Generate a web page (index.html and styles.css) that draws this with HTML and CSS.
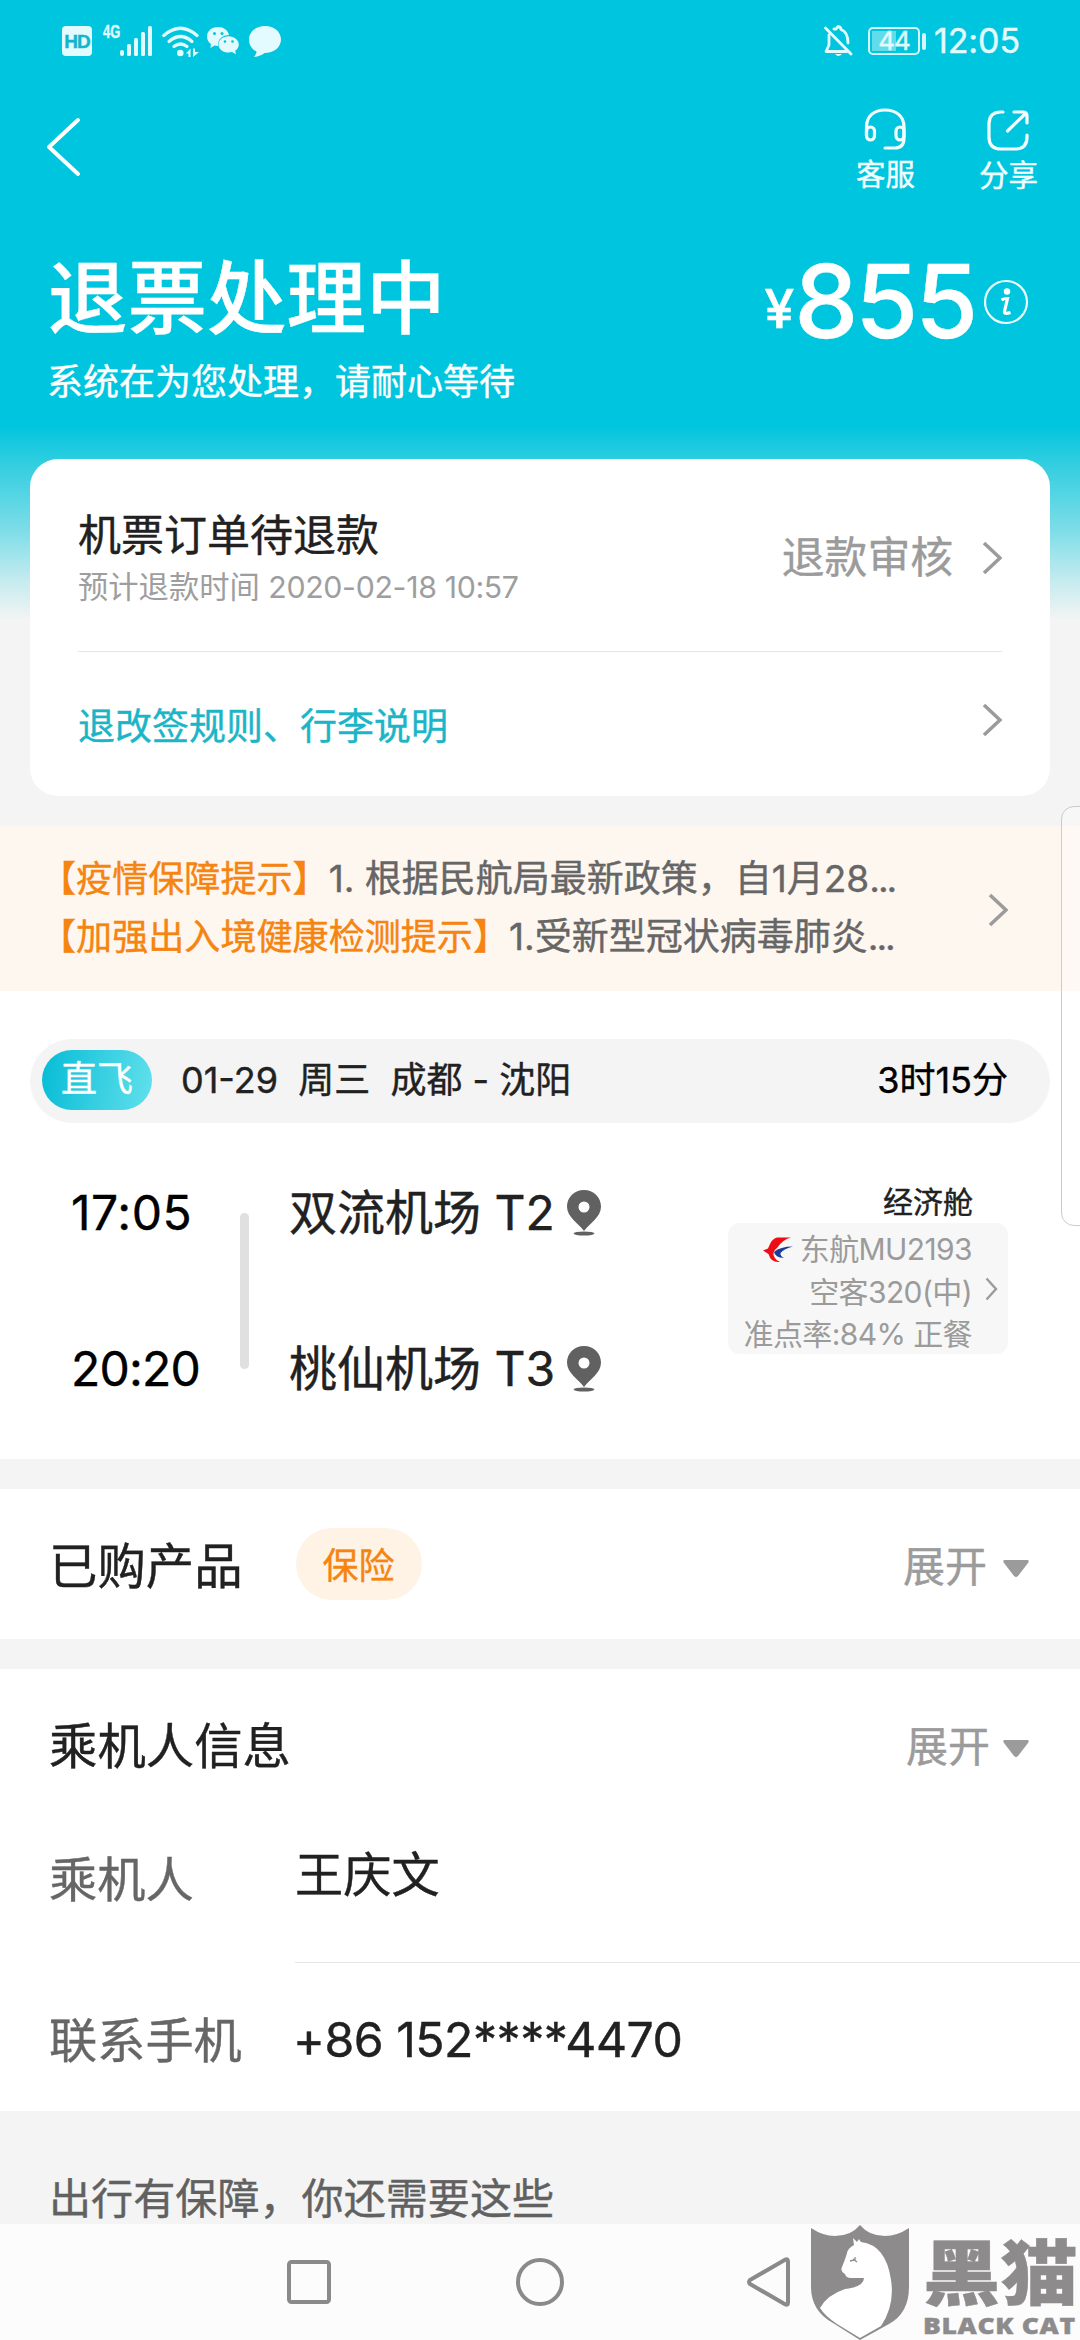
FILE: index.html
```html
<!DOCTYPE html>
<html lang="zh-CN">
<head>
<meta charset="utf-8">
<title>退票处理中</title>
<link rel="stylesheet" href="styles.css">
</head>
<body>
<div class="screen">
  <header class="hero">
    <div class="status">
      <div class="status-left">
        <span class="hd">HD</span>
        <span class="net">4G</span>
        <svg class="signal" width="32" height="30" viewBox="0 0 32 30"><g fill="#e3fbff"><rect x="0" y="24" width="4" height="6" rx="2"/><rect x="7" y="18" width="4" height="12" rx="1.5"/><rect x="14" y="12" width="4" height="18" rx="1.5"/><rect x="21" y="6" width="4" height="24" rx="1.5"/><rect x="28" y="0" width="4" height="30" rx="1.5"/></g></svg>
        <svg class="wifi" width="37" height="31" viewBox="0 0 37 31"><g fill="none" stroke="#e3fbff" stroke-width="3.2" stroke-linecap="round"><path d="M1.8 9.5Q18.500-5 35 9.500"/><path d="M7 15.500Q18.500 5.500 30 15.500"/><path d="M12 20.500Q18.500 15.500 25 20.500"/></g><circle cx="18.300" cy="27" r="3.300" fill="#e3fbff"/><path d="M24 27.500L28.500 22.500V31H26.500V27.500ZM31 22.500V31L37 26H33V22.500Z" fill="#e3fbff"/></svg>
        <svg class="wechat" width="32" height="28" viewBox="0 0 32 28"><path fill="#e3fbff" d="M11 0C4.500 0 0 4.200 0 9.500c0 3 1.400 5.600 3.900 7.400L3.500 21l4-2.400c1.200.3 2.300.4 3.600.4-.7-6.700 4.700-11 10.900-11C21 3 16.500 0 11 0Z"/><path fill="#e3fbff" d="M21.500 9.200c-5.700 0-10 3.700-10 8.200s4.300 8.200 10 8.200c1.300 0 2.400-.2 3.500-.5l4 2.100-.8-3.500c2.300-1.500 3.600-3.700 3.600-6.300 0-4.500-4.600-8.200-10.300-8.200Z"/><g fill="#00c5de"><circle cx="7.500" cy="6.500" r="1.500"/><circle cx="15" cy="6.500" r="1.500"/><circle cx="18" cy="14.500" r="1.300"/><circle cx="25.500" cy="14.500" r="1.300"/></g></svg>
        <svg width="32" height="31" viewBox="0 0 32 31"><path fill="#e3fbff" d="M16 0C7 0 0 5.800 0 13.500 0 19 3 23.500 7.500 25.600 7.500 28 6 29.500 5 31c4.500-.5 8-2 10.500-4C25 27 32 21.200 32 13.500S25 0 16 0Z"/></svg>
      </div>
      <div class="status-right">
        <svg class="bell" width="29" height="32" viewBox="0 0 29 32"><g fill="none" stroke="#e3fbff" stroke-width="2.800" stroke-linecap="round" stroke-linejoin="round"><path d="M1.500 3L27 29"/><path d="M5 10V20L2 26.500H23"/><path d="M10 4Q12 5 14 1.500Q17 2 17 4.500Q24 7 24 18"/></g><path d="M11 29h7q-3.500 4-7 0Z" fill="#e3fbff"/></svg>
        <span class="battery">44</span><i class="cap"></i>
        <span class="clock">12:05</span>
      </div>
    </div>
    <nav class="topbar">
      <svg width="36" height="60" viewBox="0 0 36 60"><path d="M32 3L3 30L32 57" fill="none" stroke="#fff" stroke-width="4" stroke-linecap="round" stroke-linejoin="round"/></svg>
      <div class="actions">
        <div class="action">
          <svg width="42" height="42" viewBox="0 0 42 42"><g fill="none" stroke="#f2feff" stroke-width="3.200" stroke-linecap="round"><path d="M2.500 28V19C2.500 8 10 2 21 2S40 8 40 19V30Q40 40 31 40H21"/><rect x="2.500" y="19" width="8" height="13" rx="4"/><rect x="32" y="19" width="8" height="13" rx="4"/></g></svg>
          <span>客服</span>
        </div>
        <div class="action">
          <svg width="42" height="42" viewBox="0 0 42 42"><g fill="none" stroke="#f2feff" stroke-width="3.200" stroke-linecap="round" stroke-linejoin="round"><path d="M16 3H14Q2 3 2 15V28Q2 40 14 40H28Q40 40 40 28V26"/><path d="M27 3H36Q40 3 40 7V14M39 4L20.500 22"/></g></svg>
          <span>分享</span>
        </div>
      </div>
    </nav>
    <div class="headline">
      <h1>退票处理中</h1>
      <div class="amount"><span class="yen">¥</span><span class="sum">855</span>
        <svg width="46" height="46" viewBox="0 0 46 46"><circle cx="23" cy="23" r="21" fill="none" stroke="#e8fcff" stroke-width="2.200"/><circle cx="24" cy="12.500" r="3.200" fill="#fff"/><path d="M18.500 21Q21 19.500 24.500 19.500L21.500 32.500Q21 35.500 27.500 33.500" fill="none" stroke="#fff" stroke-width="3.200"/></svg>
      </div>
    </div>
    <p class="lead">系统在为您处理，请耐心等待</p>
  </header>

  <section class="card">
    <div class="refund">
      <div>
        <h2>机票订单待退款</h2>
        <p>预计退款时间 <span class="stamp">2020-02-18 10:57</span></p>
      </div>
      <div class="review">退款审核<svg class="chev" viewBox="0 0 20 34"><path d="M2 2L18 17L2 32"/></svg></div>
    </div>
    <div class="rules"><span>退改签规则、行李说明</span><svg class="chev" viewBox="0 0 20 34"><path d="M2 2L18 17L2 32"/></svg></div>
  </section>

  <section class="notice">
    <div>
      <p><b>【疫情保障提示】</b>1. 根据民航局最新政策，自1月28<span class="dots">...</span></p>
      <p><b>【加强出入境健康检测提示】</b>1.受新型冠状病毒肺炎<span class="dots">...</span></p>
    </div>
    <svg class="chev" viewBox="0 0 20 34"><path d="M2 2L18 17L2 32"/></svg>
  </section>

  <section class="flight">
    <div class="route">
      <span class="direct">直飞</span>
      <span class="day">01-29&nbsp; 周三&nbsp; 成都 - 沈阳</span>
      <span class="duration">3时15分</span>
    </div>
    <div class="legs">
      <div class="times"><span class="depart">17:05</span><span class="arrive">20:20</span></div>
      <i class="bar"></i>
      <div class="ports">
        <span>双流机场 T2<svg class="pin" viewBox="0 0 34 46"><path fill-rule="evenodd" d="M17 0C7.500 0 0 7.300 0 16.500 0 27 11 33 17 41 23 33 34 27 34 16.500 34 7.300 26.500 0 17 0Zm0 11.500a5.500 5.500 0 1 1 0 11a5.500 5.500 0 1 1 0-11Z"/><ellipse cx="17" cy="43.500" rx="10.500" ry="2"/></svg></span>
        <span>桃仙机场 T3<svg class="pin" viewBox="0 0 34 46"><path fill-rule="evenodd" d="M17 0C7.500 0 0 7.300 0 16.500 0 27 11 33 17 41 23 33 34 27 34 16.500 34 7.300 26.500 0 17 0Zm0 11.500a5.500 5.500 0 1 1 0 11a5.500 5.500 0 1 1 0-11Z"/><ellipse cx="17" cy="43.500" rx="10.500" ry="2"/></svg></span>
      </div>
      <div class="cabin">
        <span class="class">经济舱</span>
        <div class="plane">
          <div class="specs">
            <span><svg width="30" height="26" viewBox="0 0 30 26"><path fill="#ee0d12" d="M0 13.500L5 11.500Q9 1 14 .500H28Q19 3 14 11Q10 14 10.500 18Q12 23 17 25Q8 26 5.500 17Z"/><path fill="#1c3b96" d="M11 15Q17 9.500 30 9.500Q21 11.500 17.500 16Q17 19 21 21Q12 20.500 11 15Z"/></svg>东航MU2193</span>
            <span>空客320(中)</span>
            <span>准点率:84% 正餐</span>
          </div>
          <svg class="chev small" viewBox="0 0 13 24"><path d="M1.500 1.500L11 12L1.500 22.500"/></svg>
        </div>
      </div>
    </div>
  </section>

  <section class="products">
    <h3>已购产品</h3><span class="tag">保险</span>
    <span class="expand">展开<svg width="26" height="18" viewBox="0 0 26 18"><path d="M2 0H24Q27 0 25 3L15 16Q13 18 11 16L1 3Q-1 0 2 0Z"/></svg></span>
  </section>

  <section class="people">
    <div class="people-head"><h3>乘机人信息</h3><span class="expand near">展开<svg width="26" height="18" viewBox="0 0 26 18"><path d="M2 0H24Q27 0 25 3L15 16Q13 18 11 16L1 3Q-1 0 2 0Z"/></svg></span></div>
    <div class="field"><span class="label">乘机人</span><span class="value name">王庆文</span></div>
    <div class="field"><span class="label">联系手机</span><span class="value phone">+86 152****4470</span></div>
  </section>

  <p class="more">出行有保障，你还需要这些</p>

  <footer class="nav">
    <svg width="44" height="44" viewBox="0 0 44 44"><rect x="2" y="2" width="40" height="40" rx="2.500"/></svg>
    <svg width="48" height="48" viewBox="0 0 48 48"><circle cx="24" cy="24" r="22"/></svg>
    <svg width="44" height="50" viewBox="0 0 44 50"><path d="M38.500 2.500Q41 1.500 41 4.500V45.500Q41 48.500 38.500 47.500L3 27Q1 25 3 23Z"/></svg>
  </footer>

  <aside class="edge-panel"></aside>
  <div class="watermark">
    <svg width="98" height="116" viewBox="0 0 98 116"><path fill="#8e8b8c" d="M0 3Q12 11 24 11Q40 11 49 0Q58 11 74 11Q86 11 98 3V62Q98 88 78 99L49 115L22 98Q0 86 0 62Z"/><path fill="#fff" d="M42 13L46 17L48 14Q49 16 50 17Q75 20 80 55Q84 80 70 101L49 113L26 99Q14 91 9 83Q16 70 34 64Q53 62 53 53H40Q35 53 34 49Q29 46 31 42Q35 32 36 28Q37 23 43 20Z"/><path d="M39 36L43 35M44 36V32M42 34L46 37" stroke="#8e8b8c" stroke-width="1.300"/></svg>
    <div class="brand"><span class="brand-cn">黑猫</span><span class="brand-en">BLACK CAT</span></div>
  </div>
</div>
</body>
</html>
```
FILE: styles.css
```css
* { box-sizing: border-box; margin: 0; padding: 0; }
body { width: 1080px; height: 2340px; overflow: hidden; background: #f4f4f4; color: #212121; font-family: Inter, "Noto Sans CJK SC", sans-serif; -webkit-text-stroke: .4px; }
svg { display: block; flex: none; }
h1, h2, h3, b { font-weight: 400; }
.screen { position: relative; height: 2340px; overflow: hidden; display: flex; flex-direction: column; background: linear-gradient(#00c5de 0, #00c5de 425px, #2dcde0 460px, #7ddde8 530px, #c4ebef 580px, #f4f4f4 620px); }

.hero { height: 459px; color: #fff; flex: none; }
.status { height: 82px; display: flex; justify-content: space-between; align-items: center; padding: 0 60px 0 62px; color: #e3fbff; }
.status-left, .status-right { display: flex; align-items: center; }
.hd { width: 30px; height: 30px; border-radius: 4px; background: #e3fbff; color: #14b4cc; font: 700 19px/31px "Liberation Sans", sans-serif; text-align: center; letter-spacing: -1px; }
.net { margin: -18px 0 0 11px; width: 17px; font: 700 19px/20px "Liberation Sans", sans-serif; transform: scaleX(.68); transform-origin: left; }
.wifi { margin-left: 10px; }
.wechat { margin: 0 10px 0 8px; }
.bell { margin-right: 15px; }
.battery { width: 52px; height: 28px; border: 2px solid #d5f7fb; border-radius: 5px; background: linear-gradient(90deg, #62dcea 24px, transparent 24px) 2px 2px / 44px 20px no-repeat; font-size: 26px; line-height: 24px; text-align: center; letter-spacing: -1px; }
.cap { width: 4px; height: 17px; margin-left: 2px; border-radius: 2px; background: #d5f7fb; }
.clock { margin-left: 8px; font-size: 34px; line-height: 40px; width: 86px; letter-spacing: -.1px; }

.topbar { height: 130px; display: flex; justify-content: space-between; padding: 35px 42px 0 46px; }
.actions { display: flex; gap: 64px; margin-top: -9px; }
.action { display: flex; flex-direction: column; align-items: center; font-size: 29.500px; line-height: 40px; gap: 4px; color: #f2feff; }
.action:last-child { padding-top: 1px; }
.headline { height: 136px; display: flex; justify-content: space-between; align-items: center; padding: 43px 51px 0 48px; }
h1 { font-size: 79.500px; line-height: 98px; font-weight: 500; margin-top: -7px; }
.amount { display: flex; align-items: center; height: 98px; }
.yen { font-size: 54px; line-height: 60px; font-weight: 500; margin-top: 14px; }
.sum { font-size: 102px; line-height: 98px; font-weight: 500; letter-spacing: -3.200px; margin: -1px 8px 0 0; }
.lead { padding: 2px 0 0 47px; font-size: 36px; line-height: 64px; }

.card { margin: 0 30px; height: 337px; flex: none; background: #fff; border-radius: 28px; padding: 0 48px; }
.refund { height: 193px; border-bottom: 1px solid #e6e6e6; display: flex; justify-content: space-between; align-items: center; padding-top: 5px; }
.refund h2 { font-size: 43px; line-height: 58px; }
.refund p { font-size: 30.300px; line-height: 46px; color: #9e9e9e; -webkit-text-stroke: 0; }
.stamp { letter-spacing: -.35px; }
.review { display: flex; align-items: center; gap: 29px; font-size: 42.800px; line-height: 60px; color: #9b9b9b; }
.chev { width: 20px; height: 34px; fill: none; stroke: #9b9b9b; stroke-width: 3.600; }
.small { width: 13px; height: 24px; stroke-width: 2.400; }
.rules { display: flex; justify-content: space-between; padding-top: 51px; font-size: 37px; line-height: 48px; color: #1bb5c7; }

.notice { margin-top: 30px; height: 165px; flex: none; background: #fef7f0; display: flex; justify-content: space-between; padding: 24px 72px 0 40px; font-size: 37px; line-height: 57px; color: #666; white-space: nowrap; }
.notice b { font-size: 36.100px; color: #f58410; }
.notice .chev { margin-top: 43px; }
.dots { letter-spacing: -2px; }

.flight { height: 468px; flex: none; background: #fff; padding: 48px 30px 0; }
.route { height: 84px; border-radius: 42px; background: #f4f4f4; display: flex; align-items: center; padding: 0 42px 2px 12px; font-size: 36px; line-height: 50px; }
.direct { width: 110px; height: 60px; border-radius: 30px; background: linear-gradient(100deg, #06bcd6, #62e0ec); color: #fff; line-height: 59px; text-align: center; }
.day { margin-left: 29px; flex: 1; }
.duration { color: #000; }
.legs { display: flex; padding-top: 60px; font-size: 48px; line-height: 60px; }
.times { width: 168px; padding-left: 41px; color: #000; display: flex; flex-direction: column; gap: 96px; }
.depart { letter-spacing: .6px; }
.arrive { letter-spacing: -.8px; }
.bar { width: 9px; height: 156px; margin: 30px 0 0 42px; border-radius: 5px; background: #e0e0e0; }
.ports { margin-left: 40px; display: flex; flex-direction: column; gap: 96px; }
.ports span { display: flex; align-items: center; gap: 12px; white-space: nowrap; }
.pin { width: 34px; height: 46px; fill: #616161; }
.cabin { margin-left: auto; width: 280px; margin-right: 42px; font-size: 30px; }
.class { display: block; text-align: right; padding-right: 35px; line-height: 38px; margin-bottom: 2px; }
.plane { height: 131px; border-radius: 12px; background: #f7f7f7; color: #9b9b9b; display: flex; align-items: center; justify-content: flex-end; padding-right: 10px; gap: 13px; -webkit-text-stroke: 0; }
.specs { display: flex; flex-direction: column; align-items: flex-end; line-height: 42.500px; white-space: nowrap; letter-spacing: -.6px; padding-top: 7px; }
.specs span { display: flex; align-items: center; gap: 7px; }

h3 { font-size: 48.400px; line-height: 60px; margin-left: -1px; }
.products { margin-top: 30px; height: 150px; flex: none; background: #fff; display: flex; align-items: center; padding: 5px 51px 0 50px; }
.tag { margin: -5px 0 0 53px; width: 126px; height: 72px; border-radius: 36px; background: #fff3e5; color: #f58410; font-size: 36px; line-height: 77px; text-align: center; }
.expand { margin-left: auto; display: flex; align-items: center; gap: 16px; font-size: 42px; line-height: 60px; color: #9b9b9b; }
.expand svg { fill: #9b9b9b; margin-top: 4px; }
.near { gap: 13px; }
.people { margin-top: 30px; height: 442px; flex: none; background: #fff; }
.people-head { height: 142px; display: flex; align-items: center; padding: 14px 51px 0 50px; }
.field { display: flex; font-size: 48.200px; line-height: 60px; height: 152px; padding-left: 49px; }
.label { width: 246px; color: #666; padding-top: 39px; }
.value { flex: 1; }
.name { padding-top: 34px; border-bottom: 1px solid #e6e6e6; }
.phone { padding-top: 47px; letter-spacing: -.5px; margin-left: -2px; }
.field:last-child { height: 148px; }
.field:last-child .label { padding-top: 48px; }
.more { height: 113px; flex: none; padding: 58px 0 0 49px; font-size: 42.100px; line-height: 60px; color: #616161; }
.nav { height: 116px; flex: none; background: #fcfcfc; display: flex; align-items: center; padding: 0 0 0 287px; }
.nav svg { fill: none; stroke: #8a8a8a; stroke-width: 4; stroke-linejoin: round; }
.nav svg:nth-child(2) { margin: 0 183px 0 185px; }

.edge-panel { position: absolute; left: 1061px; top: 806px; width: 40px; height: 420px; border: 1.500px solid #ccc; border-radius: 13px; background: rgba(255, 255, 255, .25); }
.watermark { position: absolute; left: 811px; top: 2225px; display: flex; color: #8e8b8c; }
.brand { display: flex; flex-direction: column; margin-left: 14px; width: 154px; white-space: nowrap; }
.brand-cn { font: 900 71px/86px "Noto Sans CJK SC", sans-serif; transform: scaleX(1.09); transform-origin: left; }
.brand-en { font: 800 23px/26px "Open Sans", sans-serif; margin-top: 1px; letter-spacing: .6px; transform: scaleX(1.15); transform-origin: left; }
```
